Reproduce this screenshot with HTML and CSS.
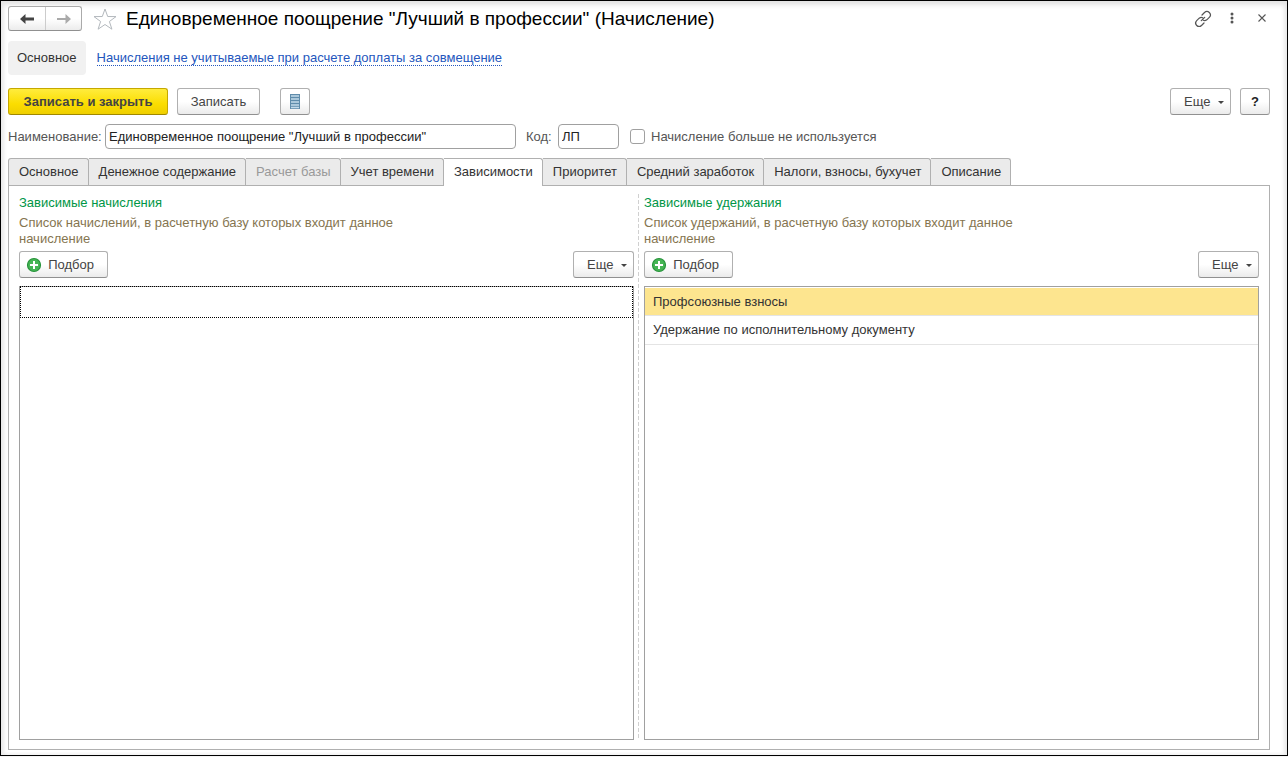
FILE: index.html
```html
<!DOCTYPE html>
<html lang="ru">
<head>
<meta charset="utf-8">
<title>Единовременное поощрение "Лучший в профессии" (Начисление)</title>
<link rel="stylesheet" href="styles.css">
</head>
<body>
<main class="window">
  <header class="titlebar">
    <div class="history">
      <button class="history-btn" type="button" aria-label="Назад">
        <svg width="16" height="12" viewBox="0 0 16 12"><path d="M1 6l5.500-5v3.600H15v2.800H6.500V11z" fill="#444"/></svg>
      </button>
      <button class="history-btn" type="button" aria-label="Вперед">
        <svg width="16" height="12" viewBox="0 0 16 12"><path d="M15 6L9.500 1v4H1v2h8.500v4z" fill="#aaa"/></svg>
      </button>
    </div>
    <button class="icon-btn star" type="button" aria-label="В избранное">
      <svg width="24" height="22" viewBox="0 0 24 22"><path d="M12 1l2.700 7.500 8.300.1-6.600 4.900 2.500 7.700L12 16.500l-6.900 4.700 2.500-7.700L1 8.600l8.300-.1z" fill="#fff" stroke="#b3b8bd" stroke-width="1"/></svg>
    </button>
    <h1 class="title">Единовременное поощрение "Лучший в профессии" (Начисление)</h1>
    <div class="window-tools">
      <button class="icon-btn" type="button" aria-label="Ссылка">
        <svg width="18" height="18" viewBox="0 0 18 18" fill="none" stroke="#555" stroke-width="1.200" stroke-linecap="round"><path d="M8 5l2.500-2.500a3.300 3.300 0 0 1 4.800 4.800L12.800 9.800Q11 11.300 9.300 10.300M10 13l-2.500 2.500a3.300 3.300 0 0 1-4.800-4.800L5.200 8.200Q7 6.700 8.700 7.700M7.300 10.700l3.400-3.400"/></svg>
      </button>
      <button class="icon-btn" type="button" aria-label="Меню">
        <svg width="16" height="16" viewBox="0 0 16 16" fill="#555"><circle cx="8" cy="3" r="1.500"/><circle cx="8" cy="7" r="1.500"/><circle cx="8" cy="11" r="1.500"/></svg>
      </button>
      <button class="icon-btn" type="button" aria-label="Закрыть">
        <svg width="16" height="16" viewBox="0 0 16 16"><path d="M4.500 3.500l7 7M11.500 3.500l-7 7" stroke="#555" stroke-width="1.100"/></svg>
      </button>
    </div>
  </header>

  <nav class="sections">
    <span class="section-current" aria-current="page">Основное</span>
    <a class="section-link" href="#excluded">Начисления не учитываемые при расчете доплаты за совмещение</a>
  </nav>

  <div class="commands">
    <button class="btn btn-primary" type="button">Записать и закрыть</button>
    <button class="btn btn-save" type="button">Записать</button>
    <button class="btn btn-square btn-list" type="button" aria-label="Список">
      <svg width="12" height="15" viewBox="0 0 12 15"><path d="M1 0h10v15H1z" fill="#5f8cab"/><path d="M2 2h8M2 5h8M2 8h8M2 11h8M2 13.500h8" stroke="#c5dcec" stroke-width="1.400"/></svg>
    </button>
    <button class="btn btn-more push" type="button">Еще<span class="caret"></span></button>
    <button class="btn btn-square btn-help" type="button">?</button>
  </div>

  <form class="fields">
    <label class="label-name" for="name">Наименование:</label>
    <input class="field field-name" id="name" type="text" value='Единовременное поощрение "Лучший в профессии"'>
    <label class="label-code" for="code">Код:</label>
    <input class="field field-code" id="code" type="text" value="ЛП">
    <label class="check"><input class="checkbox" type="checkbox">Начисление больше не используется</label>
  </form>

  <div class="tabs" role="tablist">
    <button class="tab" type="button" role="tab">Основное</button>
    <button class="tab" type="button" role="tab">Денежное содержание</button>
    <button class="tab" type="button" role="tab" disabled>Расчет базы</button>
    <button class="tab" type="button" role="tab">Учет времени</button>
    <button class="tab tab-active" type="button" role="tab" aria-selected="true">Зависимости</button>
    <button class="tab" type="button" role="tab">Приоритет</button>
    <button class="tab" type="button" role="tab">Средний заработок</button>
    <button class="tab" type="button" role="tab">Налоги, взносы, бухучет</button>
    <button class="tab" type="button" role="tab">Описание</button>
  </div>

  <div class="panel" role="tabpanel">
    <section class="column">
      <h2 class="heading">Зависимые начисления</h2>
      <p class="hint">Список начислений, в расчетную базу которых входит данное начисление</p>
      <div class="toolbar">
        <button class="btn btn-pick" type="button"><svg width="16" height="16" viewBox="0 0 16 16"><circle cx="8" cy="8" r="6.500" fill="#45b554" stroke="#27933b" stroke-width="1.200"/><path d="M8 4v8M4 8h8" stroke="#fff" stroke-width="2"/></svg>Подбор</button>
        <button class="btn btn-more push" type="button">Еще<span class="caret"></span></button>
      </div>
      <div class="list"><div class="empty-row" tabindex="0"></div></div>
    </section>
    <div class="splitter"></div>
    <section class="column">
      <h2 class="heading">Зависимые удержания</h2>
      <p class="hint">Список удержаний, в расчетную базу которых входит данное начисление</p>
      <div class="toolbar">
        <button class="btn btn-pick" type="button"><svg width="16" height="16" viewBox="0 0 16 16"><circle cx="8" cy="8" r="6.500" fill="#45b554" stroke="#27933b" stroke-width="1.200"/><path d="M8 4v8M4 8h8" stroke="#fff" stroke-width="2"/></svg>Подбор</button>
        <button class="btn btn-more push" type="button">Еще<span class="caret"></span></button>
      </div>
      <div class="list">
        <table class="rows">
          <tr class="row-selected"><td>Профсоюзные взносы</td></tr>
          <tr><td>Удержание по исполнительному документу</td></tr>
        </table>
      </div>
    </section>
  </div>
</main>
</body>
</html>
```
FILE: styles.css
```css
* { box-sizing: border-box; }

body {
  margin: 0;
  padding-bottom: 1px;
  background: #f4f4f4;
  color: #333;
  font: 13px/16px "Liberation Sans", Arial, sans-serif;
}

button, input { font: inherit; color: inherit; }
svg { display: block; flex: none; }

.window {
  display: flex;
  flex-direction: column;
  min-height: calc(100vh - 1px);
  padding: 5px 17px 5px 7px;
  border: 1px solid #000;
  background: #fff;
  box-shadow: inset 0 4px 5px #e4e4e4, inset -3px 0 4px #eee, inset 3px 0 4px #eee;
}

.titlebar { display: flex; align-items: center; height: 25px; }

.history {
  display: flex;
  height: 25px;
  border: 1px solid #aaa;
  border-bottom-color: #909090;
  border-radius: 3px;
  background: linear-gradient(#fff 50%, #ececec);
}

.history-btn {
  display: grid;
  place-items: center;
  width: 36px;
  padding: 0;
  border: 0;
  background: none;
}

.history-btn + .history-btn { border-left: 1px solid #ccc; }

.icon-btn {
  display: grid;
  place-items: center;
  width: 16px;
  height: 24px;
  padding: 0;
  border: 0;
  background: none;
}

.star { width: 24px; margin-left: 11px; }

.title {
  margin: 0 0 0 9px;
  color: #000;
  font-size: 19px;
  font-weight: 400;
  line-height: 24px;
}

.window-tools { display: flex; gap: 14px; margin-left: auto; }

.sections { display: flex; align-items: center; gap: 11px; margin-top: 10px; }

.section-current {
  padding: 9px;
  border-radius: 4px;
  background: #f1f1f1;
}

.section-link {
  border-bottom: 1px dotted #2456bd;
  color: #2456bd;
  line-height: 14px;
  text-decoration: none;
}

.commands { display: flex; margin-top: 13px; }

.btn {
  display: inline-flex;
  align-items: center;
  justify-content: center;
  height: 27px;
  padding: 0 12px;
  border: 1px solid #b0b0b0;
  border-bottom-color: #909090;
  border-radius: 3px;
  background: linear-gradient(#fff 50%, #ebebeb);
  color: #444;
  white-space: nowrap;
}

.btn-primary {
  width: 160px;
  border-color: #c5a800;
  border-bottom-color: #a08800;
  background: linear-gradient(#ffec3d, #fbdd00 60%, #efcf00);
  font-weight: 700;
}

.btn-save { width: 83px; margin-left: 9px; }
.btn-square { width: 30px; padding: 0; }
.btn-list { margin-left: 20px; }
.btn-help { margin-left: 9px; color: #222; font-weight: 700; }
.btn-more { width: 61px; padding: 0 6px 0 13px; justify-content: space-between; }
.btn-pick { width: 89px; padding: 0 13px 0 6px; justify-content: space-between; }
.push { margin-left: auto; }

.caret {
  margin-top: 2px;
  border: 3px solid transparent;
  border-top-color: #444;
  border-bottom: 0;
}

.fields { display: flex; align-items: center; margin-top: 9px; color: #555; }

.field {
  height: 25px;
  margin-left: 5px;
  padding: 0 3px;
  border: 1px solid #a0a0a0;
  border-radius: 4px;
  background: #fff;
  color: #222;
}

.label-name { width: 92px; }
.field-name { width: 411px; }
.field-code { width: 61px; }
.label-code { width: 27px; margin-left: 10px; }

.check { display: flex; align-items: center; gap: 6px; margin-left: 11px; }

.checkbox {
  appearance: none;
  width: 15px;
  height: 15px;
  margin: 0;
  border: 1px solid #a0a0a0;
  border-radius: 3px;
  background: #fff;
}

.tabs { display: flex; margin-top: 9px; }

.tab {
  height: 27px;
  padding: 0 9px 0 10px;
  border: 1px solid #b0b0b0;
  border-width: 1px 1px 0 0;
  border-radius: 0 3px 0 0;
  background: #ebebeb;
  white-space: nowrap;
}

.tab:first-child { border-left-width: 1px; border-radius: 3px 3px 0 0; }
.tab:disabled { color: #999; }

.tab-active {
  z-index: 1;
  height: 28px;
  margin-bottom: -1px;
  padding-bottom: 1px;
  background: #fff;
}

.panel {
  display: grid;
  grid-template-columns: 1fr auto 1fr;
  flex: 1;
  padding: 8px 10px 9px;
  border: 1px solid #b0b0b0;
}

.column { display: flex; flex-direction: column; }

.splitter {
  width: 1px;
  margin: 0 5px 0 4px;
  background: repeating-linear-gradient(#d0d0d0 0 4px, transparent 4px 6px);
}

.heading {
  margin: 1px 0 4px;
  color: #009646;
  font-size: 13px;
  font-weight: 400;
}

.hint { max-width: 400px; margin: 0; color: #857550; }

.toolbar { display: flex; margin: 4px 0 8px; }

.list { flex: 1; border: 1px solid #a0a0a0; }

.empty-row { height: 32px; margin-top: -1px; border: 1px dotted #000; }

.rows { width: 100%; margin-top: 1px; border-spacing: 0; }

.rows td {
  height: 29px;
  padding: 0 8px;
  border-bottom: 1px solid #e4e4e4;
}

.rows .row-selected td { height: 28px; background: #fde58f; }
```
